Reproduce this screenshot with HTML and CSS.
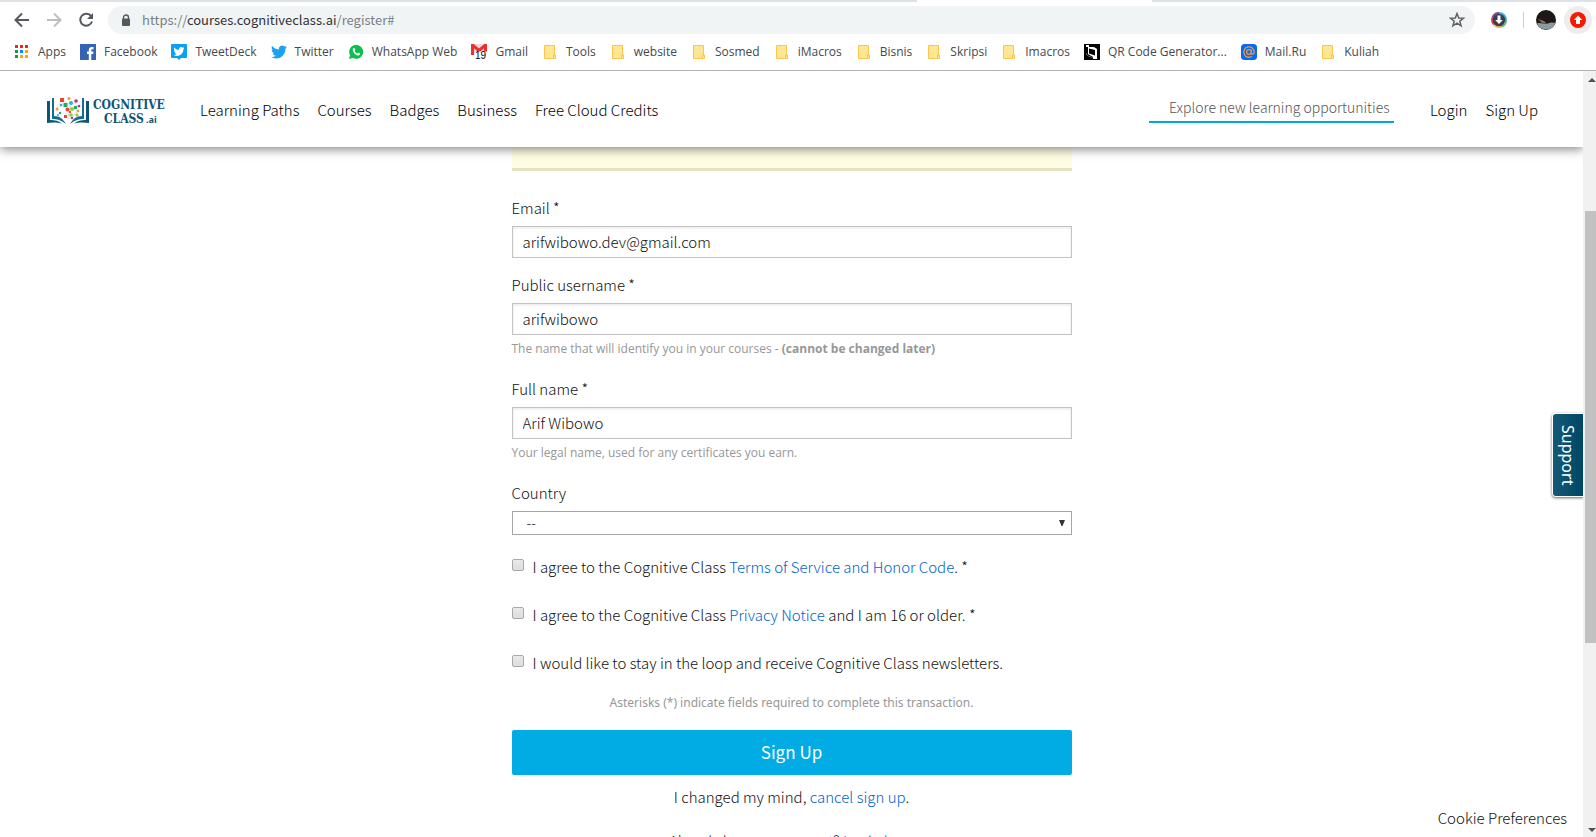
FILE: index.html
```html
<!DOCTYPE html>
<html lang="en">
<head>
<meta charset="utf-8">
<title>Register | Cognitive Class</title>
<link rel="stylesheet" href="styles.css">
</head>
<body>
<svg class="defs" aria-hidden="true">
  <symbol id="folder" viewBox="0 0 16 16"><path d="M2.500 1.500h10v10.500h1v2.500h-11z" fill="#ffe694" stroke="#fbc64b"/><path d="M11.500 14.500v-3.500h2v3.500" fill="#ffe694" stroke="#fbc64b"/></symbol>
</svg>
<div class="browser">
  <div class="tab-strip"><span class="active-tab"></span></div>
  <div class="toolbar">
    <button class="tool" aria-label="Back"><svg viewBox="0 0 16 16"><path d="M15 8H2M8 1.500 1.500 8 8 14.500" fill="none" stroke="#55595d" stroke-width="2"/></svg></button>
    <button class="tool" aria-label="Forward"><svg viewBox="0 0 16 16"><path d="M1 8h13M8 1.500 14.500 8 8 14.500" fill="none" stroke="#bbbdbf" stroke-width="2"/></svg></button>
    <button class="tool" aria-label="Reload"><svg viewBox="0 0 16 16"><path d="M13.200 4.200A6 6 0 1 0 14 9.500" fill="none" stroke="#55595d" stroke-width="2"/><path d="M15 1v6H9z" fill="#55595d"/></svg></button>
    <div class="omnibox">
      <svg class="lock" viewBox="0 0 10 13"><path d="M2.500 5V3.500a2.500 2.500 0 0 1 5 0V5" fill="none" stroke="#55595d" stroke-width="1.400"/><rect x="1" y="4.500" width="8" height="7.500" rx="1" fill="#55595d"/></svg>
      <span class="url"><span class="muted">https://</span>courses.cognitiveclass.ai<span class="muted">/register#</span></span>
      <svg class="star" viewBox="0 0 16 16"><path d="M8 1.500 9.700 6l4.800.200-3.700 3 1.300 4.700L8 11.200l-4.100 2.700 1.300-4.700-3.700-3L6.300 6z" fill="none" stroke="#5f6368" stroke-width="1.500"/></svg>
    </div>
    <div class="extensions">
      <svg class="ext" viewBox="0 0 16 16"><g fill="none" stroke-width="2"><path d="M8 1a7 7 0 0 0-6.500 4.500" stroke="#7b4b8c"/><path d="M1.500 5.500a7 7 0 0 0 1.500 7" stroke="#e8325c"/><path d="M3 12.500a7 7 0 0 0 8 2" stroke="#f5b94b"/><path d="M11 14.500a7 7 0 0 0 4-6.500" stroke="#59c07d"/><path d="M15 8a7 7 0 0 0-7-7" stroke="#31b7e6"/></g><circle cx="8" cy="8" r="6.300" fill="#3b3b52"/><path d="M6.500 3.500h3V8h2.300L8 12 4.200 8h2.300z" fill="#fff"/></svg>
      <span class="divider"></span>
      <svg class="avatar" viewBox="0 0 20 20"><circle cx="10" cy="10" r="10" fill="#1d1715"/><path d="M1 13.500C5 12 9 15 12 13.500s5-1 7.500-.500a10 10 0 0 1-18.500.500z" fill="#8b9aa2"/><path d="M2 9l6 2 3 3-5-1z" fill="#83705f"/></svg>
      <span class="update"><svg viewBox="0 0 16 16"><circle cx="8" cy="8" r="8" fill="#f51b00"/><path d="M8 3.500 12.200 8H10v4H6V8H3.800z" fill="#fff"/></svg></span>
    </div>
  </div>
  <nav class="bookmarks" aria-label="Bookmarks">
    <a href="#" class="apps"><svg viewBox="0 0 16 16"><path d="M1 1h3v3H1zM6 1h3v3H6zM11 1h3v3h-3z" fill="#f22613"/><path d="M1 6h3v3H1zM1 11h3v3H1z" fill="#139b52"/><path d="M6 6h3v3H6z" fill="#0a84ff"/><path d="M11 6h3v3h-3zM6 11h3v3H6zM11 11h3v3h-3z" fill="#fba500"/></svg>Apps</a>
    <a href="#"><svg viewBox="0 0 16 16"><path d="M0 0h16v16H0z" fill="#3565b0"/><path d="M8.800 16V10H7V7.500h1.800V6c0-2 1.200-3 3-3h1.700v2.300h-1.200c-.700 0-1 .400-1 1v1.200h2.200L13.200 10h-1.900v6z" fill="#fff"/></svg>Facebook</a>
    <a href="#"><svg viewBox="0 0 16 16"><path d="M1 0h14a1 1 0 0 1 1 1v12a1 1 0 0 1-1 1h-5l-2 2-2-2H1a1 1 0 0 1-1-1V1a1 1 0 0 1 1-1z" fill="#0aa1f5"/><use href="#bird" x="2.500" y="2" width="11" height="11" color="#fff"/></svg>TweetDeck</a>
    <a href="#"><svg viewBox="0 0 16 16"><symbol id="bird" viewBox="0 0 24 24"><path fill="currentColor" d="M23.950 4.570a10 10 0 0 1-2.820.770 4.960 4.960 0 0 0 2.160-2.720c-.950.550-2 .950-3.130 1.180a4.920 4.920 0 0 0-8.380 4.480C7.690 8.090 4.070 6.130 1.640 3.160a4.820 4.820 0 0 0-.670 2.470c0 1.710.870 3.210 2.190 4.100a4.900 4.900 0 0 1-2.230-.620v.060a4.920 4.920 0 0 0 3.950 4.830 5 5 0 0 1-2.210.080 4.940 4.940 0 0 0 4.600 3.420A9.870 9.870 0 0 1 0 19.540a13.990 13.990 0 0 0 7.560 2.210c9.050 0 13.990-7.500 13.990-13.980 0-.210 0-.420-.010-.630a9.940 9.940 0 0 0 2.410-2.570z"/></symbol><use href="#bird" width="16" height="16" color="#1da1f2"/></svg>Twitter</a>
    <a href="#"><svg viewBox="0 0 16 16"><path d="M1 15l1-3.800A7 7 0 1 1 4.800 14z" fill="#0cc04d"/><path d="M5.300 4c-1.800 1.800 1.500 7.500 4.700 7.500 1.500 0 2.200-1 2-1.900L10 8.500l-1 1C8 9 7.100 8.200 6.500 7l.800-1-.800-2z" fill="#fff"/></svg>WhatsApp Web</a>
    <a href="#"><svg viewBox="0 0 16 16"><path d="M0 0h16v11H0z" fill="#f6d5d3"/><path d="M1.500 11V1L8 6.500 14.500 1v10" fill="none" stroke="#ea3030" stroke-width="3"/><path d="M3.500 7.500H16V16H3.500z" fill="#fff"/><text x="4" y="15" class="badge-text">19</text></svg>Gmail</a>
    <a href="#"><svg><use href="#folder"/></svg>Tools</a>
    <a href="#"><svg><use href="#folder"/></svg>website</a>
    <a href="#"><svg><use href="#folder"/></svg>Sosmed</a>
    <a href="#"><svg><use href="#folder"/></svg>iMacros</a>
    <a href="#"><svg><use href="#folder"/></svg>Bisnis</a>
    <a href="#"><svg><use href="#folder"/></svg>Skripsi</a>
    <a href="#"><svg><use href="#folder"/></svg>Imacros</a>
    <a href="#"><svg viewBox="0 0 16 16"><path d="M0 0h16v16H0z"/><path d="M2 1h3v2h5l3 2v10H9v-1l-5-2-2-2z" fill="#fff"/><path d="M4 3v7l5 3v1l-6-3-1-2V3z"/><path d="M5 4.500l6 1.500v5.500L5 9.500z"/></svg>QR Code Generator...</a>
    <a href="#"><svg viewBox="0 0 16 16"><rect width="16" height="16" rx="3.500" fill="#0968f5"/><g fill="none" stroke="#e89b32" stroke-width="1.300"><circle cx="8" cy="8" r="2.400"/><path d="M10.400 5.500v3.300c0 2.200 2.800 1.800 2.800-.800A5.200 5.200 0 1 0 11 12.300"/></g></svg>Mail.Ru</a>
    <a href="#"><svg><use href="#folder"/></svg>Kuliah</a>
  </nav>
</div>
<div class="viewport">
  <div class="page">
    <header class="site-header">
      <a href="#" class="logo" aria-label="Cognitive Class.ai">
        <svg viewBox="0 -2 120 30">
          <path d="M0 4h3v19c5 0 9 1 12 3.500C9 25 4 25.500 0 26z" fill="#0d5574"/><path d="M5 1h2v18c6 0 9 3 12 8-5-4-9-5-14-5z" fill="#126d91"/>
          <path d="M42 4h-3v19c-5 0-9 1-12 3.500 6-1.500 11-1 15-.500z" fill="#0d5574"/><path d="M37 1h-2v18c-6 0-9 3-12 8 5-4 9-5 14-5z" fill="#126d91"/>
          <path d="M10 9l5-6 7 4 6-1 4 6-5 6-7-1-5-1-5-5 8-4 9 5 5 3-10 7-1-6 3-10" fill="none" stroke="#ccd8c4" stroke-width=".600"/>
          <g fill="#ee4138"><path d="M13 1h4v4h-4zM22 14h2v2h-2zM17 18h3v3h-3z"/><circle cx="20.500" cy="12.500" r="2"/></g>
          <g fill="#f29a37"><circle cx="22" cy="1.500" r="1.500"/><circle cx="10" cy="12" r="1.500"/><circle cx="31" cy="14" r="1.300"/></g>
          <g fill="#1eaa6c"><path d="M16.500 6h4v4h-4zM27 9h3v3h-3zM12 15h2v2h-2z"/></g>
          <g fill="#28b2d8"><circle cx="24" cy="6" r="2"/><circle cx="14" cy="8" r="1.300"/><circle cx="11" cy="18" r="1"/></g>
          <g fill="#c52e70"><circle cx="29" cy="4" r="1.800"/><circle cx="32" cy="9" r="1.300"/><circle cx="25" cy="21" r="1.200"/></g>
          <g fill="#97c93d"><circle cx="25" cy="12" r="2"/><circle cx="24" cy="18" r="1.800"/><circle cx="30" cy="18" r="1.500"/></g>
          <text x="46" y="12" class="logo-text">COGNITIVE</text><text x="57" y="26" class="logo-text">CLASS</text><text x="99" y="26" class="logo-ai">.ai</text>
        </svg>
      </a>
      <nav class="main-nav">
        <a href="#">Learning Paths</a><a href="#">Courses</a><a href="#">Badges</a><a href="#">Business</a><a href="#">Free Cloud Credits</a>
      </nav>
      <input class="search" type="text" aria-label="Search" placeholder="Explore new learning opportunities">
      <nav class="account-nav"><a href="#">Login</a><a href="#">Sign Up</a></nav>
    </header>
    <main class="content">
      <div class="notice"></div>
      <form class="register">
        <div class="field"><label for="email">Email *</label><input id="email" type="text" value="arifwibowo.dev@gmail.com"></div>
        <div class="field"><label for="username">Public username *</label><input id="username" type="text" value="arifwibowo"><p class="tip">The name that will identify you in your courses - <strong>(cannot be changed later)</strong></p></div>
        <div class="field"><label for="name">Full name *</label><input id="name" type="text" value="Arif Wibowo"><p class="tip">Your legal name, used for any certificates you earn.</p></div>
        <div class="field"><label for="country">Country</label>
          <div class="select-box"><select id="country"><option>--</option></select><svg viewBox="0 0 6 6" aria-hidden="true"><path d="M0 0h6L3.500 6h-1z" fill="#333"/></svg></div></div>
        <div class="checks">
          <div class="check"><input id="tos" type="checkbox"><label for="tos">I agree to the Cognitive Class <a href="#">Terms of Service and Honor Code</a>. *</label></div>
          <div class="check"><input id="privacy" type="checkbox"><label for="privacy">I agree to the Cognitive Class <a href="#">Privacy Notice</a> and I am 16 or older. *</label></div>
          <div class="check"><input id="news" type="checkbox"><label for="news">I would like to stay in the loop and receive Cognitive Class newsletters.</label></div>
        </div>
        <p class="required-note">Asterisks (*) indicate fields required to complete this transaction.</p>
        <button class="submit" type="submit">Sign Up</button>
        <p class="alt">I changed my mind, <a href="#">cancel sign up</a>.</p>
        <p class="alt alt-login">Already have an account? <a href="#">Login here</a></p>
      </form>
    </main>
    <button class="support">Support</button>
    <button class="cookies">Cookie Preferences</button>
  </div>
  <div class="scrollbar" aria-hidden="true">
    <svg viewBox="0 0 8 4"><path d="M0 4 4 0l4 4z" fill="#505050"/></svg>
    <div class="track"><div class="thumb"></div></div>
    <svg viewBox="0 0 8 4"><path d="M0 0h8L4 4z" fill="#505050"/></svg>
  </div>
</div>
</body>
</html>
```
FILE: styles.css
```css
* { box-sizing: border-box; }
body {
  margin: 0;
  height: 100vh;
  display: flex;
  flex-direction: column;
  overflow: hidden;
  background: #fff;
  color: #111;
  font: 300 15px/20px "Noto Sans CJK SC", sans-serif;
}
a { color: #0064cc; text-decoration: none; }
p { margin: 0; }
button, input, select { font: inherit; color: inherit; }
button { border: 0; background: none; padding: 0; }
svg { display: block; flex: none; }
.defs { width: 0; height: 0; position: absolute; }

/* browser chrome */
.browser { flex: none; border-bottom: 1px solid #b4b4b4; font-family: "Open Sans", sans-serif; font-weight: 400; }
.tab-strip { height: 2px; background: #dee1e6; display: flex; padding-left: 917px; }
.active-tab { width: 235px; background: #fff; }
.toolbar { display: flex; align-items: center; margin-top: 4px; height: 28px; padding: 0 4px 0 14px; }
.tool { width: 16px; height: 16px; margin-right: 16px; }
.tool svg { width: 16px; height: 16px; }
.omnibox { flex: 1; display: flex; align-items: center; height: 28px; padding: 0 10px 0 13px; margin-left: -2px; border-radius: 14px; background: #f0f4f5; }
.lock { width: 10px; height: 13px; }
.url { flex: 1; margin-left: 11px; font: 13px/20px "Noto Sans CJK SC", sans-serif; color: #333; }
.muted { color: #7b8084; }
.star { width: 16px; height: 16px; }
.extensions { display: flex; align-items: center; margin-left: 16px; }
.ext { width: 16px; height: 16px; }
.divider { width: 1px; height: 16px; margin: 0 12px 0 16px; background: #ccc; }
.avatar { width: 20px; height: 20px; }
.update { display: flex; align-items: center; justify-content: center; width: 28px; height: 28px; margin-left: 8px; border-radius: 50%; background: #ededed; }
.update svg { width: 16px; height: 16px; }
.bookmarks { display: flex; align-items: center; gap: 14px; height: 36px; padding: 0 14px; font-size: 12px; line-height: 16px; }
.bookmarks a { display: flex; align-items: center; gap: 8px; color: #44494d; white-space: nowrap; }
.bookmarks svg { width: 16px; height: 16px; }
.badge-text { font: 10px "Liberation Sans", sans-serif; fill: #000; }

/* page */
.viewport { flex: 1; min-height: 0; display: flex; }
.page { position: relative; flex: 1; min-width: 0; overflow: hidden; }
.site-header { position: relative; z-index: 1; display: flex; align-items: center; height: 76px; padding: 2px 45px 0 47px; background: #fff; box-shadow: 0 2px 10px rgba(0, 0, 0, .5); }
.site-header a { color: #000; }
.logo svg { width: 120px; height: 30px; }
.logo-text { font: bold 12px "DejaVu Serif Condensed", "DejaVu Serif", serif; fill: #0d5574; }
.logo-ai { font: bold 9px "Noto Sans", sans-serif; fill: #0d5574; }
.main-nav { display: flex; gap: 18px; margin-left: 33px; }
.account-nav { display: flex; gap: 18px; margin-left: 36px; }
.search { width: 245px; height: 28px; margin: 0 0 2px auto; padding: 0 0 2px 20px; border: 0; border-bottom: 2px solid #00a7e1; border-radius: 0; background: none; font-size: 14px; }
.search::placeholder { color: #555; opacity: 1; }
.content { width: 560px; margin: 0 auto; }
.notice { height: 24px; background: #fffde3; border-bottom: 3px solid #e7e2bf; }
.register { padding-top: 27px; }
.field { margin-bottom: 17px; }
.field > label { display: block; margin-bottom: 8px; }
.field > input { display: block; width: 100%; height: 32px; padding: 0 10px 2px; border: 1px solid #c4c4c4; border-radius: 0; background: #fff; box-shadow: inset 0 1px 3px rgba(0, 0, 0, .1); }
.tip { margin: 6px 0 22px; color: #979797; font: 12px/16px "Open Sans", sans-serif; }
.select-box { position: relative; }
.select-box select { appearance: none; display: block; width: 100%; height: 24px; padding: 0 14px 2px; border: 1px solid #a6a6a6; border-radius: 0; background: #fff; font-size: 14px; line-height: 20px; }
.select-box svg { position: absolute; right: 7px; top: 9px; width: 6px; height: 6px; pointer-events: none; }
.checks { display: flex; flex-direction: column; gap: 28px; padding-top: 5px; }
.check { display: flex; align-items: flex-start; gap: 9px; }
.check input { appearance: none; flex: none; width: 12px; height: 12px; margin: 2px 0 0; border: 1px solid #a9a9a9; border-radius: 2px; background: linear-gradient(#eaeaea, #dcdcdc); }
.required-note { margin: 22px 0 19px; text-align: center; color: #979797; font: 12px/16px "Noto Sans", sans-serif; }
.submit { width: 100%; height: 45px; padding-bottom: 2px; border-radius: 2px; background: #00ace3; color: #fff; font-size: 17px; font-weight: 400; }
.alt { margin-top: 12px; text-align: center; }
.alt-login { margin-top: 24px; }
.support { position: absolute; right: 0; top: 343px; width: 30px; height: 82px; border-radius: 3px 0 0 3px; background: linear-gradient(90deg, #145a76, #004765); box-shadow: 0 0 0 1px #fff, 0 1px 3px 1px rgba(0, 0, 0, .6); color: #fff; writing-mode: vertical-rl; font: 16px "Noto Sans", sans-serif; }
.cookies { position: absolute; right: 16px; bottom: 9px; }
.scrollbar { flex: none; display: flex; flex-direction: column; align-items: flex-end; width: 13px; padding: 7px 0 5px; background: #f1f1f1; }
.scrollbar svg { width: 8px; height: 4px; }
.track { flex: 1; align-self: stretch; padding: 129px 0 0 2px; }
.thumb { height: 432px; background: #c1c1c1; }
```
